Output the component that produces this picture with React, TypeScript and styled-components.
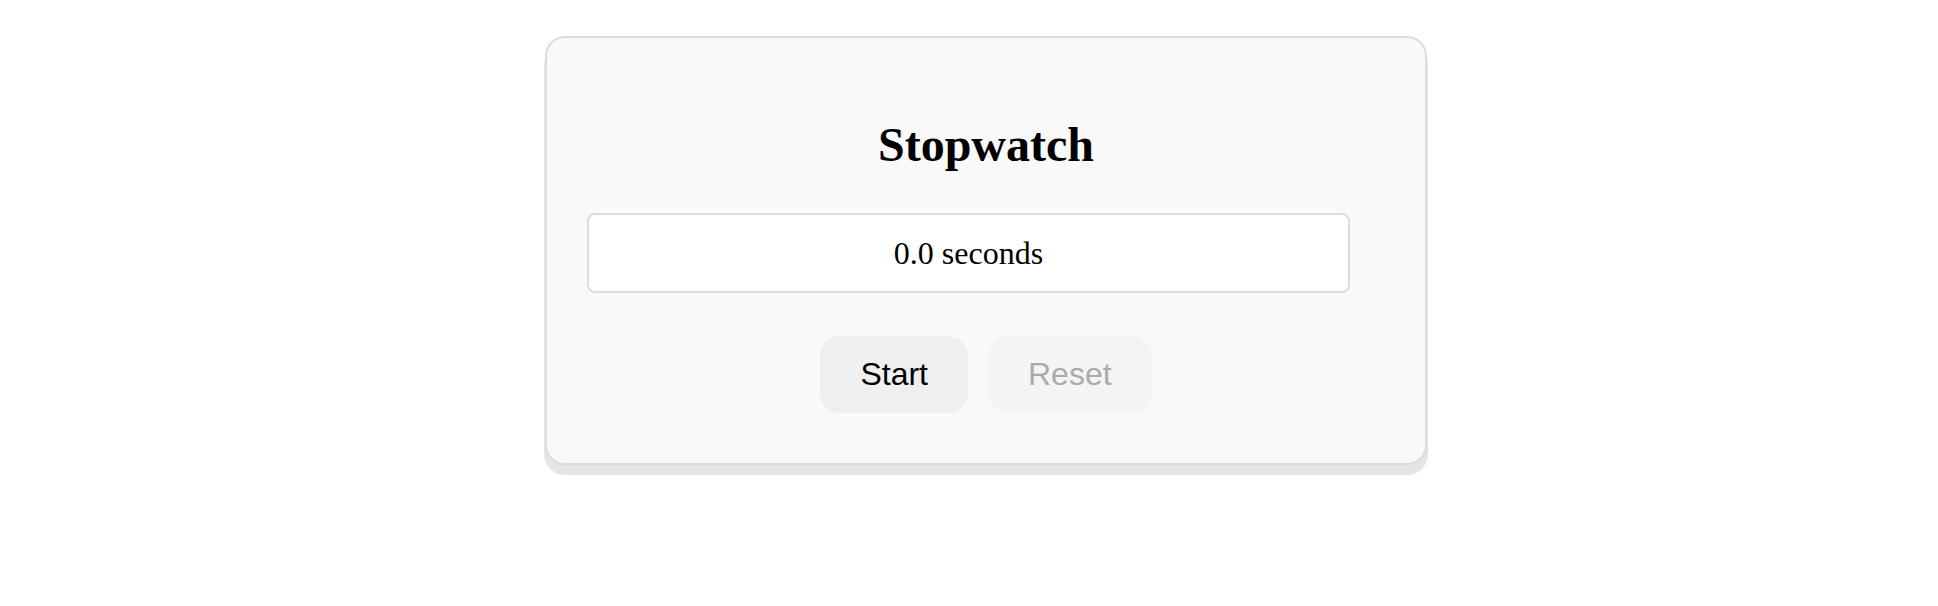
import styled, { createGlobalStyle } from 'styled-components';

const GlobalStyle = createGlobalStyle`
	body {
		margin: 8px;
		background: #ffffff;
		font-family: 'Liberation Serif', 'Times New Roman', serif;
	}
`;

const Page = styled.div`
	display: flex;
	justify-content: center;
	padding: 28px 0 60px 34px;
`;

const Card = styled.div`
	box-sizing: border-box;
	width: 882px;
	display: flex;
	flex-direction: column;
	padding: 40px 40px 50px;
	background: #f9f9f9;
	border: 2px solid #dcdcdc;
	border-radius: 20px;
	box-shadow: 0 9px 0 1px #e5e5e5;
`;

const Title = styled.h1`
	align-self: center;
	margin: 39px 0 41px;
	font-size: 48px;
	font-weight: bold;
	line-height: 55px;
	color: #000;
`;

const Display = styled.div`
	box-sizing: border-box;
	width: 763px;
	height: 80px;
	display: flex;
	align-items: center;
	justify-content: center;
	background: #ffffff;
	border: 2px solid #dcdcdc;
	border-radius: 8px;
	font-size: 32px;
	color: #000;
`;

const Controls = styled.div`
	display: flex;
	justify-content: center;
	gap: 20px;
	margin-top: 43px;
`;

const Button = styled.button<{ $disabled?: boolean }>`
	padding: 20px 40px;
	border: none;
	border-radius: 20px;
	font-family: 'Liberation Sans', Arial, sans-serif;
	font-size: 32px;
	line-height: 37px;
	background: ${(p) => (p.$disabled ? '#f4f4f4' : '#efefef')};
	color: ${(p) => (p.$disabled ? '#aaaaaa' : '#000000')};
	cursor: ${(p) => (p.$disabled ? 'default' : 'pointer')};
`;

const App = () => {
	return (
		<>
			<GlobalStyle />
			<Page>
				<Card>
					<Title>Stopwatch</Title>
					<Display>0.0 seconds</Display>
					<Controls>
						<Button>Start</Button>
						<Button $disabled disabled>
							Reset
						</Button>
					</Controls>
				</Card>
			</Page>
		</>
	);
};

export default App;
